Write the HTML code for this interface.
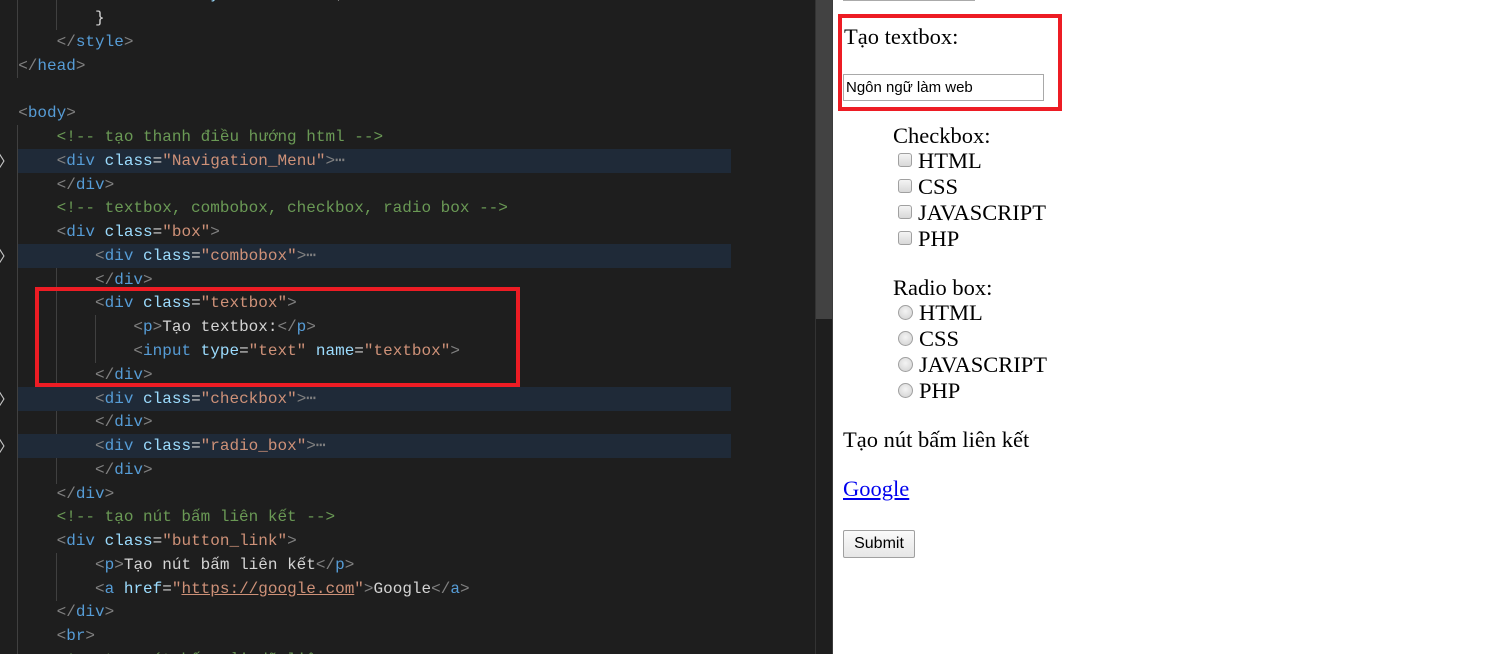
<!DOCTYPE html>
<html><head><meta charset="utf-8">
<style>
*{margin:0;padding:0;box-sizing:border-box}
body{width:1492px;height:654px;overflow:hidden;background:#fff;position:relative;font-family:"Liberation Serif","Noto Serif CJK SC",serif}
#ed{position:absolute;left:0;top:0;width:815px;height:654px;background:#1e1e1e;overflow:hidden;font-family:"Liberation Mono","DejaVu Sans Mono",monospace;font-size:16px;color:#d4d4d4}
.l{position:absolute;left:-1px;height:24px;line-height:24px;white-space:pre;width:815px}
.hl{background:#1f2a38;left:18px;width:713px}
.b{color:#808080}.t{color:#569cd6}.a{color:#9cdcfe}.s{color:#ce9178}.c{color:#6a9955}.d{color:#808080}
.g{position:absolute;width:1px;background:#404040}
.ar{position:absolute;left:-2px;color:#c5c5c5;font-family:"DejaVu Sans",sans-serif;font-size:16px}
#sb{position:absolute;left:815px;top:0;width:17px;height:654px;background:#1e1e1e;border-left:1px solid #333}
#th{position:absolute;left:816px;top:0;width:16px;height:319px;background:#424242}
#edge{position:absolute;left:832px;top:0;width:1px;height:654px;background:#3c3c3c}
.rb{position:absolute;border:4px solid #ed1c24}
.r{position:absolute;font-size:22.5px;color:#000;white-space:nowrap;line-height:24px}
.cb{position:absolute;width:14px;height:14px;border:1px solid #a0a0a0;border-radius:3px;background:linear-gradient(#f4f4f4,#d8d8d8)}
.rd{position:absolute;width:15px;height:15px;border:1px solid #a0a0a0;border-radius:50%;background:radial-gradient(circle at 50% 40%,#f4f4f4,#d0d0d0)}
</style></head><body>
<div id="ed">
<div class="g" style="left:17px;top:0;height:78px"></div>
<div class="g" style="left:56px;top:0;height:30px"></div>
<div class="g" style="left:17px;top:125px;height:529px"></div>
<div class="g" style="left:56px;top:244px;height:240px"></div>
<div class="g" style="left:56px;top:553px;height:48px"></div>
<div class="g" style="left:95px;top:315px;height:48px"></div>

<div class="l" style="top:-18px">            <span class="a">font-family</span>: <span class="s">sans-serif</span>;</div>
<div class="l" style="top:6px">          }</div>
<div class="l" style="top:30px">      <span class="b">&lt;/</span><span class="t">style</span><span class="b">&gt;</span></div>
<div class="l" style="top:54px">  <span class="b">&lt;/</span><span class="t">head</span><span class="b">&gt;</span></div>
<div class="l" style="top:101px">  <span class="b">&lt;</span><span class="t">body</span><span class="b">&gt;</span></div>
<div class="l" style="top:125px">      <span class="c">&lt;!-- tạo thanh điều hướng html --&gt;</span></div>
<div class="l hl" style="top:149px"></div>
<div class="l" style="top:149px">      <span class="b">&lt;</span><span class="t">div</span> <span class="a">class</span>=<span class="s">"Navigation_Menu"</span><span class="b">&gt;</span><span class="d">⋯</span></div>
<div class="l" style="top:173px">      <span class="b">&lt;/</span><span class="t">div</span><span class="b">&gt;</span></div>
<div class="l" style="top:196px">      <span class="c">&lt;!-- textbox, combobox, checkbox, radio box --&gt;</span></div>
<div class="l" style="top:220px">      <span class="b">&lt;</span><span class="t">div</span> <span class="a">class</span>=<span class="s">"box"</span><span class="b">&gt;</span></div>
<div class="l hl" style="top:244px"></div>
<div class="l" style="top:244px">          <span class="b">&lt;</span><span class="t">div</span> <span class="a">class</span>=<span class="s">"combobox"</span><span class="b">&gt;</span><span class="d">⋯</span></div>
<div class="l" style="top:268px">          <span class="b">&lt;/</span><span class="t">div</span><span class="b">&gt;</span></div>
<div class="l" style="top:291px">          <span class="b">&lt;</span><span class="t">div</span> <span class="a">class</span>=<span class="s">"textbox"</span><span class="b">&gt;</span></div>
<div class="l" style="top:315px">              <span class="b">&lt;</span><span class="t">p</span><span class="b">&gt;</span>Tạo textbox:<span class="b">&lt;/</span><span class="t">p</span><span class="b">&gt;</span></div>
<div class="l" style="top:339px">              <span class="b">&lt;</span><span class="t">input</span> <span class="a">type</span>=<span class="s">"text"</span> <span class="a">name</span>=<span class="s">"textbox"</span><span class="b">&gt;</span></div>
<div class="l" style="top:363px">          <span class="b">&lt;/</span><span class="t">div</span><span class="b">&gt;</span></div>
<div class="l hl" style="top:387px"></div>
<div class="l" style="top:387px">          <span class="b">&lt;</span><span class="t">div</span> <span class="a">class</span>=<span class="s">"checkbox"</span><span class="b">&gt;</span><span class="d">⋯</span></div>
<div class="l" style="top:410px">          <span class="b">&lt;/</span><span class="t">div</span><span class="b">&gt;</span></div>
<div class="l hl" style="top:434px"></div>
<div class="l" style="top:434px">          <span class="b">&lt;</span><span class="t">div</span> <span class="a">class</span>=<span class="s">"radio_box"</span><span class="b">&gt;</span><span class="d">⋯</span></div>
<div class="l" style="top:458px">          <span class="b">&lt;/</span><span class="t">div</span><span class="b">&gt;</span></div>
<div class="l" style="top:482px">      <span class="b">&lt;/</span><span class="t">div</span><span class="b">&gt;</span></div>
<div class="l" style="top:505px">      <span class="c">&lt;!-- tạo nút bấm liên kết --&gt;</span></div>
<div class="l" style="top:529px">      <span class="b">&lt;</span><span class="t">div</span> <span class="a">class</span>=<span class="s">"button_link"</span><span class="b">&gt;</span></div>
<div class="l" style="top:553px">          <span class="b">&lt;</span><span class="t">p</span><span class="b">&gt;</span>Tạo nút bấm liên kết<span class="b">&lt;/</span><span class="t">p</span><span class="b">&gt;</span></div>
<div class="l" style="top:577px">          <span class="b">&lt;</span><span class="t">a</span> <span class="a">href</span>=<span class="s">"<u>https://google.com</u>"</span><span class="b">&gt;</span>Google<span class="b">&lt;/</span><span class="t">a</span><span class="b">&gt;</span></div>
<div class="l" style="top:600px">      <span class="b">&lt;/</span><span class="t">div</span><span class="b">&gt;</span></div>
<div class="l" style="top:624px">      <span class="b">&lt;</span><span class="t">br</span><span class="b">&gt;</span></div>
<div class="l" style="top:648px">      <span class="c">&lt;!-- tạo nút bấm gửi dữ liệu --&gt;</span></div>

<div class="ar" style="top:148px">〉</div>
<div class="ar" style="top:243px">〉</div>
<div class="ar" style="top:386px">〉</div>
<div class="ar" style="top:433px">〉</div>
<div class="rb" style="left:35px;top:287px;width:485px;height:100px"></div>
</div>
<div id="sb"></div><div id="th"></div><div id="edge"></div>

<div style="position:absolute;left:843px;top:-2px;width:132px;height:3px;border:1px solid #aaa;border-top:none"></div>
<div class="rb" style="left:838px;top:14px;width:224px;height:97px"></div>
<div class="r" style="left:844px;top:25px">Tạo textbox:</div>
<div style="position:absolute;left:843px;top:74px;width:201px;height:27px;border:1px solid #a9a9a9;font-family:'Liberation Sans',sans-serif;font-size:15px;line-height:25px;padding-left:2px">Ngôn ngữ làm web</div>

<div class="r" style="left:893px;top:124px">Checkbox:</div>
<div class="cb" style="left:898px;top:153px"></div><div class="r" style="left:918px;top:149px">HTML</div>
<div class="cb" style="left:898px;top:179px"></div><div class="r" style="left:918px;top:175px">CSS</div>
<div class="cb" style="left:898px;top:205px"></div><div class="r" style="left:918px;top:201px">JAVASCRIPT</div>
<div class="cb" style="left:898px;top:231px"></div><div class="r" style="left:918px;top:227px">PHP</div>

<div class="r" style="left:893px;top:276px">Radio box:</div>
<div class="rd" style="left:898px;top:305px"></div><div class="r" style="left:919px;top:301px">HTML</div>
<div class="rd" style="left:898px;top:331px"></div><div class="r" style="left:919px;top:327px">CSS</div>
<div class="rd" style="left:898px;top:357px"></div><div class="r" style="left:919px;top:353px">JAVASCRIPT</div>
<div class="rd" style="left:898px;top:383px"></div><div class="r" style="left:919px;top:379px">PHP</div>

<div class="r" style="left:843px;top:428px">Tạo nút bấm liên kết</div>
<div class="r" style="left:843px;top:477px;color:#0000ee;text-decoration:underline">Google</div>
<div style="position:absolute;left:843px;top:530px;width:72px;height:28px;border:1px solid #a0a0a0;border-radius:2px;background:linear-gradient(#fafafa,#e6e6e6);font-family:'Liberation Sans',sans-serif;font-size:16px;line-height:26px;text-align:center;color:#000">Submit</div>
</body></html>
